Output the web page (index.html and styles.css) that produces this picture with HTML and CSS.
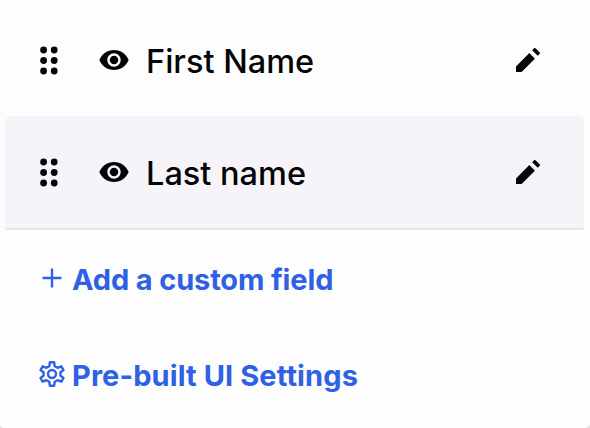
FILE: index.html
```
<!DOCTYPE html>
<html lang="en">
<head>
    <meta charset="UTF-8">
    <meta name="viewport" content="width=device-width, initial-scale=1.0">
    <title>Form Fields</title>
    <link rel="stylesheet" href="styles.css">
</head>
<body>
    <svg width="0" height="0" class="sprites">
        <symbol id="drag" viewBox="0 0 18 29">
            <circle cx="3.6" cy="4" r="3.4"/><circle cx="14.2" cy="4" r="3.4"/>
            <circle cx="3.6" cy="14.5" r="3.4"/><circle cx="14.2" cy="14.5" r="3.4"/>
            <circle cx="3.6" cy="25" r="3.4"/><circle cx="14.2" cy="25" r="3.4"/>
        </symbol>
        <symbol id="eye" viewBox="0 0 24 24">
            <path d="M12 4.5C7 4.5 2.73 7.61 1 12c1.73 4.39 6 7.5 11 7.5s9.27-3.11 11-7.5c-1.73-4.39-6-7.5-11-7.5zM12 17c-2.76 0-5-2.24-5-5s2.24-5 5-5 5 2.24 5 5-2.24 5-5 5zm0-8.2a3.2 3.2 0 1 0 0 6.4 3.2 3.2 0 0 0 0-6.4z"/>
        </symbol>
        <symbol id="pencil" viewBox="0 0 24 24">
            <path d="M3 16.8V21h4.2L17.2 11l-4.200-4.200L3 16.800zM20.800 7.400a.8.8 0 0 0 0-1.100L17.700 3.200a.8.8 0 0 0-1.100 0l-1.500 1.500 4.200 4.200 1.500-1.500z"/>
        </symbol>
    </svg>

    <div class="panel">
        <div class="field">
            <svg class="drag"><use href="#drag"/></svg>
            <svg class="eye"><use href="#eye"/></svg>
            <span class="name">First Name</span>
            <svg class="edit"><use href="#pencil"/></svg>
        </div>
        <div class="field active">
            <svg class="drag"><use href="#drag"/></svg>
            <svg class="eye"><use href="#eye"/></svg>
            <span class="name">Last name</span>
            <svg class="edit"><use href="#pencil"/></svg>
        </div>
        <a class="link add">
            <svg class="link-icon" viewBox="0 0 28 28"><path d="M14 3.5v19M4.5 13h19"/></svg>
            <span>Add a custom field</span>
        </a>
        <a class="link settings">
            <svg class="link-icon" viewBox="0 0 28 28">
                <path d="M11.9 1.2h4.2l.6 4 2.9 1.6 3.7-1.5 2.2 3.7-3.1 2.4v3.2l3.1 2.4-2.2 3.7-3.7-1.5-2.9 1.6-.6 4h-4.2l-.6-4-2.9-1.6-3.7 1.5L2.5 17l3.1-2.4v-3.2L2.5 9l2.2-3.7 3.7 1.5 2.9-1.6z"/>
                <circle cx="14" cy="13" r="4"/>
            </svg>
            <span>Pre-built UI Settings</span>
        </a>
    </div>
</body>
</html>
```
FILE: styles.css
```
html {
    background-color: #dedee0;
}
body {
    margin: 0;
    font-family: Inter, "Liberation Sans", sans-serif;
}
.sprites {
    display: block;
}
.panel {
    height: 428px;
    padding: 4px 6px 0 5px;
    box-sizing: border-box;
    overflow: hidden;
    background-color: #fefdfe;
    border-radius: 0 0 5px 4px;
}
.field {
    display: flex;
    align-items: center;
    height: 112px;
    padding: 0 40px 0 35px;
    color: #050507;
    fill: #050507;
}
.active {
    background-color: #f6f4f8;
    border-bottom: 2px solid #e5e4e7;
    border-radius: 6px 6px 3px 3px;
}
.drag {
    width: 18px;
    height: 29px;
}
.eye {
    width: 32px;
    height: 32px;
    margin: 0 16px 0 40px;
}
.name {
    font-size: 32.5px;
    font-weight: 450;
    line-height: 40px;
    white-space: nowrap;
    padding-top: 3px;
}
.edit {
    width: 32px;
    height: 32px;
    margin-left: auto;
}
.link {
    display: flex;
    align-items: center;
    height: 40px;
    padding-left: 33px;
    color: #2f61e4;
    font-size: 29px;
    font-weight: 650;
    white-space: nowrap;
}
.add {
    margin-top: 29px;
    letter-spacing: -0.15px;
}
.settings {
    margin-top: 56px;
    letter-spacing: 0.1px;
}
.link-icon {
    width: 28px;
    height: 28px;
    margin-right: 6px;
    fill: none;
    stroke: #2f61e4;
    stroke-width: 2.4;
    stroke-linejoin: round;
}
```
